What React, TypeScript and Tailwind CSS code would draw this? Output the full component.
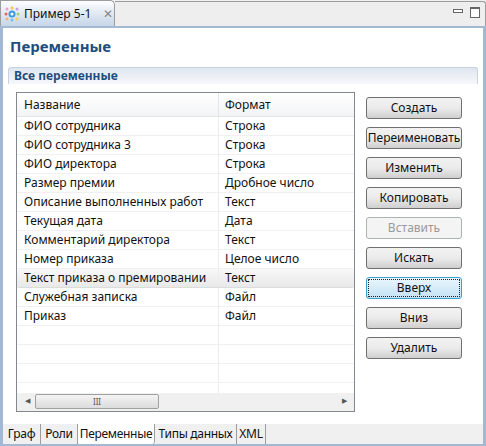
import React from "react";

const rows: [string, string][] = [
  ["ФИО сотрудника", "Строка"],
  ["ФИО сотрудника 3", "Строка"],
  ["ФИО директора", "Строка"],
  ["Размер премии", "Дробное число"],
  ["Описание выполненных работ", "Текст"],
  ["Текущая дата", "Дата"],
  ["Комментарий директора", "Текст"],
  ["Номер приказа", "Целое число"],
  ["Текст приказа о премировании", "Текст"],
  ["Служебная записка", "Файл"],
  ["Приказ", "Файл"],
  ["", ""],
  ["", ""],
  ["", ""],
  ["", ""],
];

const buttons = [
  "Создать",
  "Переименовать",
  "Изменить",
  "Копировать",
  "Вставить",
  "Искать",
  "Вверх",
  "Вниз",
  "Удалить",
];

const tabs: { label: string; w: string }[] = [
  { label: "Граф", w: "w-[38px]" },
  { label: "Роли", w: "w-[37px]" },
  { label: "Переменные", w: "w-[77px]" },
  { label: "Типы данных", w: "w-[82px]" },
  { label: "XML", w: "w-[29px]" },
];

function TabIcon() {
  return (
    <svg width="16" height="16" viewBox="0 0 16 16">
      <circle cx="3" cy="3" r="1.5" fill="#f4a0c0" />
      <circle cx="8" cy="2" r="1.5" fill="#f9c24a" />
      <circle cx="13" cy="3" r="1.5" fill="#c5a0e8" />
      <circle cx="2" cy="8" r="1.5" fill="#f06060" />
      <circle cx="14" cy="8" r="1.5" fill="#9fd070" />
      <circle cx="3" cy="13" r="1.5" fill="#f6b070" />
      <circle cx="8" cy="14" r="1.5" fill="#70c0f0" />
      <circle cx="13" cy="13" r="1.5" fill="#f4d060" />
      <circle cx="8" cy="8" r="3.5" fill="#3a9ad9" />
      <circle cx="8" cy="8" r="1.6" fill="#ffffff" />
    </svg>
  );
}

export default function App() {
  return (
    <div
      className="relative h-[446px] w-[486px] overflow-hidden bg-[#f0f0f0] text-[12px] text-[#111]"
      style={{ fontFamily: '"Noto Sans", "Liberation Sans", sans-serif' }}
    >
      {/* top tab bar */}
      <div className="flex h-[26px] items-end">
        <div className="flex h-[26px] w-[115px] items-center gap-[4px] rounded-tr-[5px] border border-b-0 border-[#9c9c9c] bg-gradient-to-b from-[#fdfdfe] to-[#c6d5e7] pl-[3px]">
          <TabIcon />
          <span className="text-[12px]">Пример 5-1</span>
          <span className="ml-[8px] text-[12px] text-[#888]">✕</span>
        </div>
        <div className="relative flex h-[25px] flex-1 items-start justify-end gap-[7px] rounded-tr-[3px] border-t border-r border-[#9c9c9c] bg-[#eeeeee] pr-[5px] pt-[5px]">
          <div className="mt-[2px] h-[4px] w-[10px] border border-[#666] bg-white" />
          <div className="h-[11px] w-[10px] border border-[#666] border-t-[2px] bg-white" />
        </div>
      </div>

      {/* main panel */}
      <div className="flex h-[398px] flex-col border-x-[3px] border-t-[2px] border-[#a3b9d3] bg-white">
        <div className="px-[7px] pt-[7px] text-[15px] font-bold text-[#1e4e7e]">
          Переменные
        </div>
        <div className="mx-[5px] mt-[9px] flex h-[17px] items-center rounded-t-[3px] border border-b-0 border-[#c9d3de] bg-gradient-to-b from-[#dfe6ef] to-[#f6f8fb] px-[5px] text-[12px] font-bold text-[#1e4e7e]">
          Все переменные
        </div>
        <div className="mt-[8px] flex gap-[11px] pl-[13px]">
          {/* table */}
          <div className="flex h-[320px] w-[339px] flex-col border border-[#828790] bg-white">
            <div className="flex h-[24px] border-b border-[#e2e5ea] bg-gradient-to-b from-white to-[#f3f4f6]">
              <div className="w-[202px] border-r border-[#e4e6ea] pl-[7px] pt-[3px]">
                Название
              </div>
              <div className="flex-1 pl-[6px] pt-[3px]">Формат</div>
            </div>
            <div className="flex-1 overflow-hidden">
              {rows.map((r, i) => {
                const sel = i === 8;
                return (
                  <div
                    key={i}
                    className={`flex h-[19px] border-b ${
                      sel
                        ? "rounded-[2px] border-[#dcdcdc] bg-gradient-to-b from-[#f8f8f8] to-[#e9e9e9]"
                        : "border-[#f0f0f0]"
                    }`}
                  >
                    <div className="w-[202px] border-r border-[#ededed] pl-[7px] leading-[18px]">
                      {r[0]}
                    </div>
                    <div className="flex-1 pl-[6px] leading-[18px]">{r[1]}</div>
                  </div>
                );
              })}
            </div>
            {/* scrollbar */}
            <div className="flex h-[18px] items-center bg-[#f0f0f0] px-[2px]">
              <span className="w-[16px] text-center text-[7px] text-[#555]">◀</span>
              <div className="flex h-[15px] w-[124px] items-center justify-center rounded-[2px] border border-[#a0a0a0] bg-gradient-to-b from-[#f4f4f4] to-[#dcdcdc] text-[8px] leading-none text-[#555]">
                III
              </div>
              <div className="flex-1" />
              <span className="w-[16px] text-center text-[7px] text-[#555]">▶</span>
            </div>
          </div>
          {/* buttons */}
          <div className="flex flex-col gap-[8px] pt-[5px]">
            {buttons.map((b) => {
              const dis = b === "Вставить";
              const focus = b === "Вверх";
              return (
                <div
                  key={b}
                  className={`flex h-[22px] w-[96px] items-center justify-center rounded-[3px] border ${
                    dis
                      ? "border-[#adb2b5] bg-[#f4f4f4] text-[#9a9a9a]"
                      : focus
                      ? "border-[#3c9fd5] bg-gradient-to-b from-[#eaf6fd] to-[#c4e2f5] text-[#111] outline-1 outline-dotted outline-offset-[-3px] outline-[#222]"
                      : "border-[#707070] bg-gradient-to-b from-[#f2f2f2] via-[#ebebeb] to-[#cfcfcf] text-[#111]"
                  }`}
                >
                  {b}
                </div>
              );
            })}
          </div>
        </div>
      </div>

      {/* bottom tabs */}
      <div className="flex h-[22px] border-x-[3px] border-b-[2px] border-[#a3b9d3] bg-[#f0f0f0]">
        {tabs.map((t) => {
          const sel = t.label === "Переменные";
          return (
            <div
              key={t.label}
              className={`flex h-[20px] items-center justify-center whitespace-nowrap border-r border-[#9c9c9c] text-[12px] tracking-[-0.3px] ${t.w} ${
                sel ? "rounded-b-[3px] bg-white" : ""
              }`}
            >
              {t.label}
            </div>
          );
        })}
      </div>
    </div>
  );
}
